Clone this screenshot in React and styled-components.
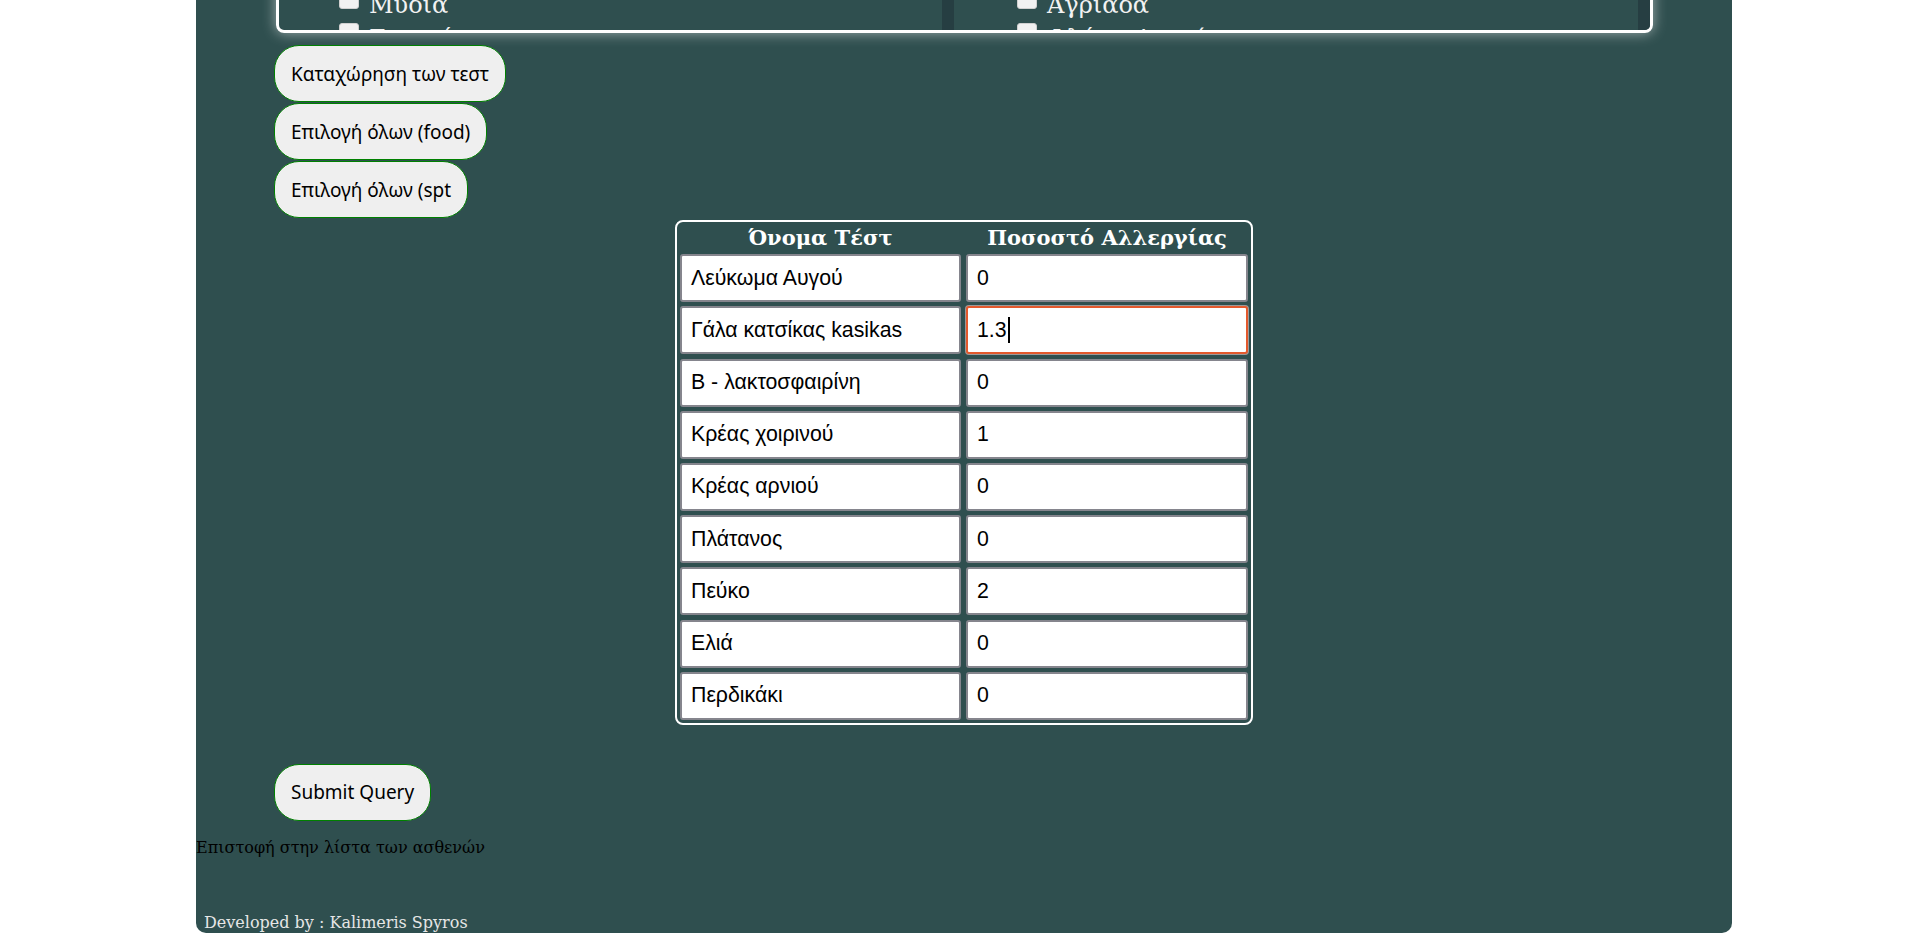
import React from "react";
import styled, { createGlobalStyle } from "styled-components";

const GlobalStyle = createGlobalStyle`
  html, body {
    margin: 0;
    padding: 0;
    background: #ffffff;
  }
  body {
    font-family: "DejaVu Serif", serif;
    font-size: 16px;
  }
`;

const Container = styled.div`
  box-sizing: border-box;
  width: 1536px;
  margin: -173px 0 0 196px;
  padding-bottom: 1px;
  background: #2f4f4f;
  border-radius: 0 0 10px 10px;
  display: flex;
  flex-direction: column;
  align-items: flex-start;
`;

const Panel = styled.div`
  align-self: stretch;
  display: flex;
  height: 200px;
  margin: 0 79px 0 80px;
  border: 3px solid #ffffff;
  border-radius: 8px;
  box-shadow: 0 0 14px rgba(255, 255, 255, 0.55);
  overflow: hidden;
`;

const Column = styled.ul`
  flex: ${(p) => (p.$wide ? "1 1 auto" : "0 0 675px")};
  box-sizing: border-box;
  margin: 0;
  padding: 22px 0 0 ${(p) => p.$indent}px;
  list-style: none;
  overflow: hidden;
  border-right: 12px solid #263e42;
`;

const Item = styled.li`
  height: 34px;
  line-height: 34px;
  color: #f2f2f2;
  font-family: "DejaVu Serif", serif;
  font-size: 24px;
  white-space: nowrap;
`;

const Check = styled.span`
  display: inline-block;
  box-sizing: border-box;
  width: 20px;
  height: 20px;
  margin: 0 10px 4px 0;
  vertical-align: baseline;
  background: #f1f1f1;
  border: 1px solid #d0d0d0;
  border-radius: 3px;
`;

const ButtonStack = styled.div`
  display: flex;
  flex-direction: column;
  align-items: flex-start;
  gap: 1px;
  margin: 12px 0 0 78px;
`;

const Button = styled.button`
  display: block;
  box-sizing: border-box;
  height: 57px;
  margin: ${(p) => p.$top || 0}px 0 0 ${(p) => p.$left || 0}px;
  padding: 0 16px;
  border: 1px solid #008000;
  border-radius: 25px;
  background: #efefef;
  color: #000000;
  font-family: "Noto Sans", sans-serif;
  font-size: 19px;
  cursor: pointer;
`;

const Table = styled.div`
  align-self: center;
  margin-top: 2px;
  display: grid;
  grid-template-columns: 281px 282px;
  column-gap: 5px;
  row-gap: 4.2px;
  padding: 3px;
  border: 2px solid #ffffff;
  border-radius: 8px;
`;

const HeadCell = styled.div`
  height: 25px;
  line-height: 25px;
  text-align: center;
  color: #ffffff;
  font-family: "DejaVu Serif", serif;
  font-weight: bold;
  font-size: 21px;
  white-space: nowrap;
`;

const Cell = styled.div`
  box-sizing: border-box;
  height: 48px;
  display: flex;
  align-items: center;
  padding: 0 9px;
  background: #ffffff;
  border: 2px solid ${(p) => (p.$focus ? "#e3592d" : "#85858d")};
  box-shadow: ${(p) => (p.$focus ? "0 0 0 1px #9a9a9a" : "none")};
  border-radius: 3px;
  color: #000000;
  font-family: "Liberation Sans", Arial, sans-serif;
  font-size: 21.3px;
  white-space: nowrap;
`;

const Caret = styled.span`
  display: inline-block;
  width: 2px;
  height: 26px;
  margin-left: 1px;
  background: #000000;
`;

const BackLink = styled.div`
  margin-top: 17px;
  color: #000000;
  font-family: "DejaVu Serif", serif;
  font-size: 16px;
  line-height: 19px;
`;

const Footer = styled.div`
  margin-top: 56px;
  padding-left: 8px;
  color: #e6e6e6;
  font-family: "DejaVu Serif", serif;
  font-size: 16px;
  line-height: 19px;
`;

const foods = [
  "Αυγό",
  "Γάλα",
  "Ψάρι",
  "Γαρίδες",
  "Μύδια",
  "Σουπιές",
  "Καλαμάρι",
  "Χταπόδι",
  "Φιστίκι",
  "Σουσάμι",
];

const plants = [
  "Πλάτανος",
  "Πεύκο",
  "Ελιά",
  "Περδικάκι",
  "Αγριάδα",
  "Φλέως Λειμώνιος",
  "Κυπαρίσσι",
  "Αρτεμισία",
  "Αμβροσία",
  "Σημύδα",
];

const rows = [
  ["Λεύκωμα Αυγού", "0"],
  ["Γάλα κατσίκας kasikas", "1.3"],
  ["Β - λακτοσφαιρίνη", "0"],
  ["Κρέας χοιρινού", "1"],
  ["Κρέας αρνιού", "0"],
  ["Πλάτανος", "0"],
  ["Πεύκο", "2"],
  ["Ελιά", "0"],
  ["Περδικάκι", "0"],
];

export default function App() {
  return (
    <>
      <GlobalStyle />
      <Container>
        <Panel>
          <Column $indent={60}>
            {foods.map((f) => (
              <Item key={f}>
                <Check />
                {f}
              </Item>
            ))}
          </Column>
          <Column $wide $indent={63}>
            {plants.map((f) => (
              <Item key={f}>
                <Check />
                {f}
              </Item>
            ))}
          </Column>
        </Panel>

        <ButtonStack>
          <Button>Καταχώρηση των τεστ</Button>
          <Button>Επιλογή όλων (food)</Button>
          <Button>Επιλογή όλων (spt</Button>
        </ButtonStack>

        <Table>
          <HeadCell>Όνομα Τέστ</HeadCell>
          <HeadCell>Ποσοστό Αλλεργίας</HeadCell>
          {rows.map(([name, value], i) => (
            <React.Fragment key={name}>
              <Cell>{name}</Cell>
              <Cell $focus={i === 1}>
                {value}
                {i === 1 && <Caret />}
              </Cell>
            </React.Fragment>
          ))}
        </Table>

        <Button $top={39} $left={78}>
          Submit Query
        </Button>
        <BackLink>Επιστοφή στην λίστα των ασθενών</BackLink>
        <Footer>Developed by : Kalimeris Spyros</Footer>
      </Container>
    </>
  );
}
